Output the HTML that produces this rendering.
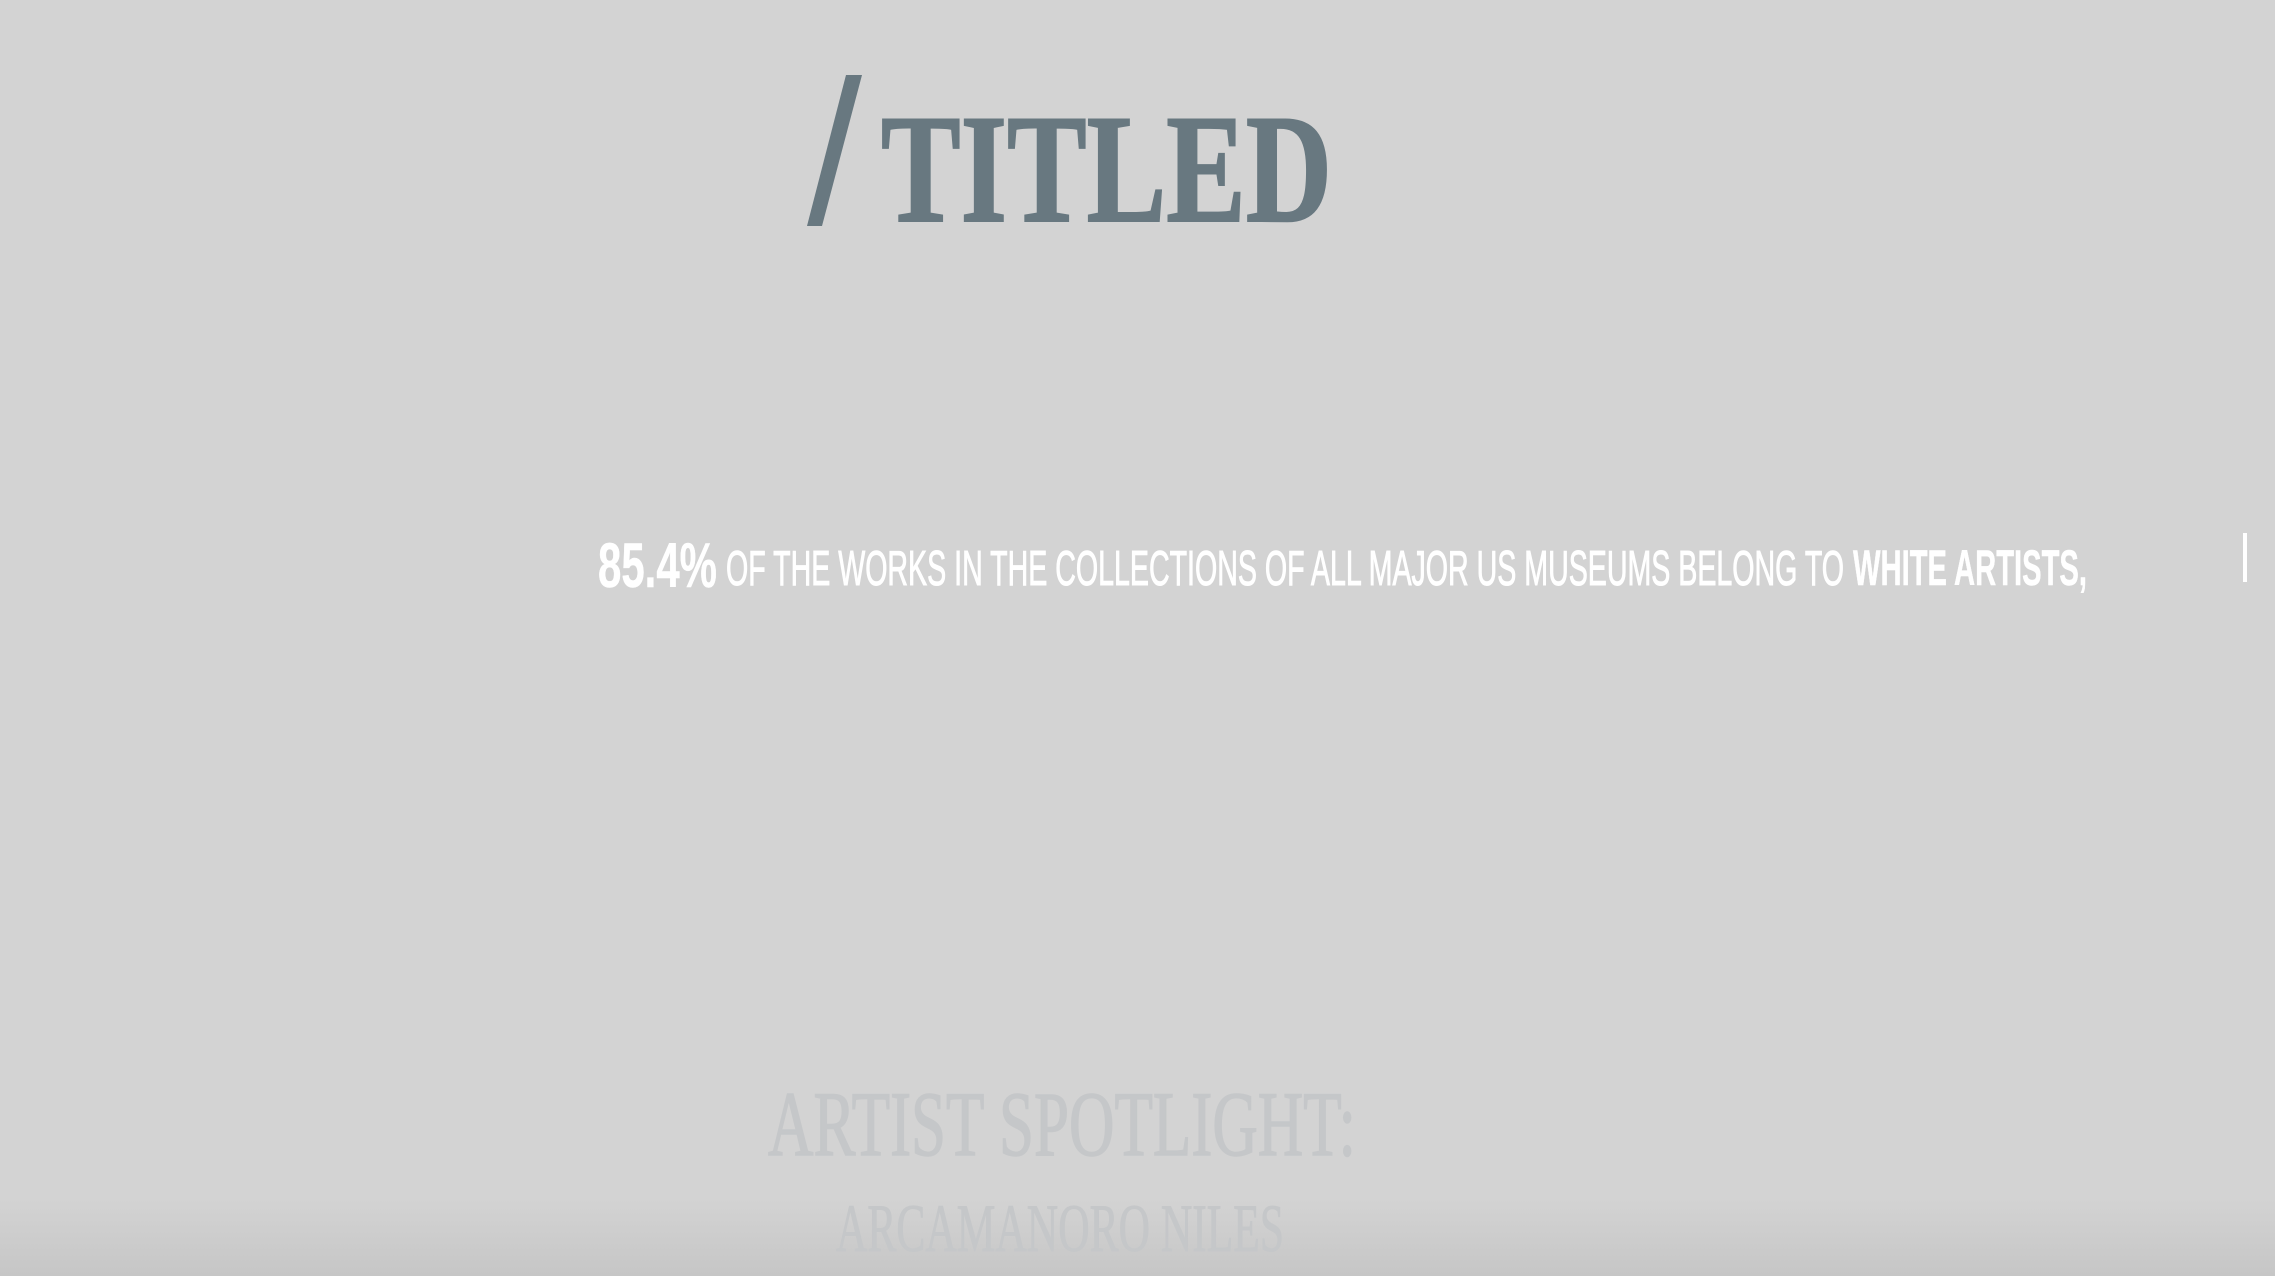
<!DOCTYPE html>
<html><head><meta charset="utf-8"><style>
html,body{margin:0;padding:0;width:2275px;height:1276px;overflow:hidden;background:#d3d3d3}
svg{display:block}
</style></head><body>
<svg width="2275" height="1276" viewBox="0 0 2275 1276" xmlns="http://www.w3.org/2000/svg">
<defs><linearGradient id="g" x1="0" y1="0" x2="0" y2="1">
<stop offset="0" stop-color="#d3d3d3"/><stop offset="1" stop-color="#c6c6c6"/></linearGradient></defs>
<rect width="2275" height="1276" fill="#d3d3d3"/>
<rect y="1200" width="2275" height="76" fill="url(#g)"/>
<polygon points="846,75 862,75 822,226 807,226" fill="#687880"/>
<text x="881" y="221" font-family="Liberation Serif, serif" font-weight="bold" font-size="155" fill="#687880" stroke="#687880" stroke-width="2" textLength="451" lengthAdjust="spacingAndGlyphs">TITLED</text>
<g font-family="Liberation Sans, sans-serif" fill="#ffffff" stroke="#ffffff">
<text x="598" y="587" font-weight="bold" font-size="63" stroke-width="0.5" textLength="119" lengthAdjust="spacingAndGlyphs">85.4%</text>
<text x="726" y="585" font-size="49" stroke-width="1" textLength="1118" lengthAdjust="spacingAndGlyphs">OF THE WORKS IN THE COLLECTIONS OF ALL MAJOR US MUSEUMS BELONG TO</text>
<text x="1853" y="585" font-weight="bold" font-size="50" stroke-width="0.5" textLength="234" lengthAdjust="spacingAndGlyphs">WHITE ARTISTS,</text>
</g>
<rect x="2243" y="533" width="4" height="49" fill="#ffffff"/>
<g font-family="Liberation Serif, serif" fill="#c5c7c9" stroke="#c5c7c9">
<text x="768" y="1155" font-size="92" stroke-width="1.5" textLength="588" lengthAdjust="spacingAndGlyphs">ARTIST SPOTLIGHT:</text>
<text x="836" y="1251" font-size="68" stroke-width="1" textLength="448" lengthAdjust="spacingAndGlyphs">ARCAMANORO NILES</text>
</g>
</svg>
</body></html>
